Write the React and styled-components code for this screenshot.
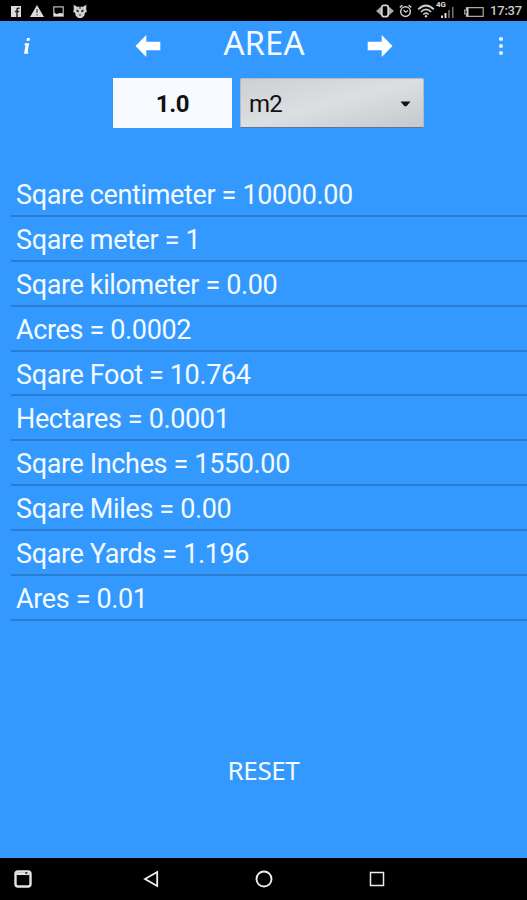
import React from 'react'
import styled, { createGlobalStyle } from 'styled-components'

const RESULTS = [
  { label: 'Sqare centimeter', value: '10000.00' },
  { label: 'Sqare meter', value: '1' },
  { label: 'Sqare kilometer', value: '0.00' },
  { label: 'Acres', value: '0.0002' },
  { label: 'Sqare Foot', value: '10.764' },
  { label: 'Hectares', value: '0.0001' },
  { label: 'Sqare Inches', value: '1550.00' },
  { label: 'Sqare Miles', value: '0.00' },
  { label: 'Sqare Yards', value: '1.196' },
  { label: 'Ares', value: '0.01' },
]

export default function App() {
  return (
    <Screen>
      <GlobalStyle />
      <StatusBar />
      <Toolbar>
        <InfoButton aria-label="Info">
          <svg width="10" height="18" viewBox="0 0 10 18" fill="#fff">
            <path d="M5 1h3l-.5 2.7h-3zM2.8 6.2h4.4L5.6 14.8h.8L6 16.8H2l1.6-8.6H2.4z" />
          </svg>
        </InfoButton>
        <ArrowButton aria-label="Previous">
          <ArrowIcon />
        </ArrowButton>
        <Title>AREA</Title>
        <ArrowButton aria-label="Next">
          <ArrowIcon flipped />
        </ArrowButton>
        <MenuButton aria-label="Menu">
          <svg width="6" height="20" viewBox="0 0 6 20" fill="#e8f5ff">
            <circle cx="3" cy="3" r="2.1" />
            <circle cx="3" cy="10" r="2.1" />
            <circle cx="3" cy="17" r="2.1" />
          </svg>
        </MenuButton>
      </Toolbar>
      <Converter>
        <Amount>1.0</Amount>
        <UnitSelect>
          m2
          <svg width="11" height="6" viewBox="0 0 11 6" fill="#111">
            <path d="M.5.5h10L6.5 5.2h-2z" />
          </svg>
        </UnitSelect>
      </Converter>
      <ResultList>
        {RESULTS.map(({ label, value }) => (
          <Result key={label}>
            {label} = {value}
          </Result>
        ))}
      </ResultList>
      <ResetRow>
        <ResetButton>RESET</ResetButton>
      </ResetRow>
      <NavigationBar />
    </Screen>
  )
}

function ArrowIcon({ flipped }) {
  return (
    <svg width="26" height="24" viewBox="0 0 26 24" fill="#fff">
      <path
        d="M.5 12 11.3 1v6.7h14v8.6h-14V23z"
        transform={flipped ? 'translate(26 0) scale(-1 1)' : undefined}
      />
    </svg>
  )
}

function StatusBar() {
  return (
    <StatusWrapper>
      <Notifications>
        <svg width="10" height="11" viewBox="0 0 10 11">
          <path d="M0 0h10v11H0z" fill="#dcdcdc" />
          <path d="M8.5 2.3H7.3Q6 2.3 6 3.6V11M3.9 5.4h4.3" stroke="#222" strokeWidth="1.5" fill="none" />
        </svg>
        <svg width="14" height="12" viewBox="0 0 14 12">
          <path d="M7 0l7 12H0z" fill="#dcdcdc" />
          <path d="M7 4v4M7 9.2v1.4" stroke="#555" strokeWidth="1.4" />
        </svg>
        <svg width="11" height="11" viewBox="0 0 11 11">
          <path d="M.8.8h9.4v9.4H.8z" fill="none" stroke="#bbb" strokeWidth="1.2" />
          <path d="M1 6.5l2.5 1.6L7 7l3 .5V10H1z" fill="#ddd" />
        </svg>
        <svg width="14" height="15" viewBox="0 0 14 15">
          <path
            d="M.6.8 4 2.7h6L13.4.8l-.2 4.5.6 2.8-1.9.7-.6 3L8.8 14H5.2l-2.5-2.2-.6-3L.2 8.1l.6-2.8z"
            fill="#d2d2d2"
          />
          <path
            d="M3.5 5.3l2.2 1.2v2L3.6 7.4zM10.5 5.3 8.3 6.5v2l2.1-1.1zM5.7 10.5h2.6L7 12zM6.5 3h1v2h-1z"
            fill="#222"
          />
        </svg>
      </Notifications>
      <SystemIcons>
        <svg width="18" height="14" viewBox="0 0 18 14">
          <path d="M5 2.8v8.4L0 7zM13 2.8v8.4L18 7z" fill="#aaa" />
          <rect x="5.8" y="1.4" width="6.4" height="11.2" rx="2" fill="#000" stroke="#d4d4d4" strokeWidth="1.8" />
        </svg>
        <svg width="13" height="14" viewBox="0 0 13 14" fill="none" stroke="#ccc">
          <circle cx="6.5" cy="7.6" r="4.8" strokeWidth="1.5" />
          <path d="M.8 3.4 3.4 1.2M12.2 3.4 9.6 1.2" strokeWidth="1.5" />
          <path d="M4.5 6l2.2 2.2L9 6.6" strokeWidth="1.2" />
        </svg>
        <svg width="18" height="14" viewBox="0 0 18 14" fill="none" stroke="#ccc" strokeWidth="1.7">
          <path d="M1.2 5.3Q9-2.3 16.8 5.3M3.9 8Q9 2.7 14.1 8M6.3 10.5Q9 7.8 11.7 10.5" />
          <circle cx="9" cy="12.3" r="1.2" fill="#ccc" stroke="none" />
        </svg>
        <Signal>
          <NetworkType>4G</NetworkType>
          <svg width="13" height="11" viewBox="0 0 13 11">
            <path d="M0 8.5h2V11H0zM3.5 6h2v5h-2z" fill="#ddd" />
            <path d="M7.2 3h1.6v8H7.2zM11 0h1.5v11H11z" fill="#777" />
          </svg>
        </Signal>
        <Battery width="20" height="10" viewBox="0 0 20 10">
          <path d="M2.5.7h16.7v8.6H2.5V7H.7V3h1.8z" fill="none" stroke="#aaa" strokeWidth="1.2" />
          <path d="M2.5 1h2v8h-2z" fill="#ccc" />
        </Battery>
        <Clock>17:37</Clock>
      </SystemIcons>
    </StatusWrapper>
  )
}

function NavigationBar() {
  return (
    <NavWrapper>
      <NavButton aria-label="Panel">
        <svg width="18" height="18" viewBox="0 0 18 18" fill="none" stroke="#e4e4e4">
          <rect x="1.5" y="1.5" width="15" height="15" rx="2.5" strokeWidth="2.4" />
          <path d="M2.5 3.8h13" strokeWidth="2.5" />
          <path d="M11.3 3h2" stroke="#111" strokeWidth="1.5" />
        </svg>
      </NavButton>
      <NavButton aria-label="Back">
        <svg width="16" height="18" viewBox="0 0 16 18" fill="none" stroke="#eee" strokeWidth="1.8">
          <path d="M14.2 2v14L2 9z" />
        </svg>
      </NavButton>
      <NavButton aria-label="Home">
        <svg width="18" height="18" viewBox="0 0 18 18" fill="none" stroke="#eee" strokeWidth="1.9">
          <circle cx="9" cy="9" r="7.5" />
        </svg>
      </NavButton>
      <NavButton aria-label="Recent apps">
        <svg width="16" height="16" viewBox="0 0 16 16" fill="none" stroke="#eee" strokeWidth="1.5">
          <rect x="1.5" y="1.5" width="13" height="13" />
        </svg>
      </NavButton>
    </NavWrapper>
  )
}

const GlobalStyle = createGlobalStyle`
  *, *::before, *::after {
    box-sizing: border-box;
  }

  body {
    margin: 0;
  }

  button {
    padding: 0;
    border: none;
    background: none;
    color: inherit;
    font: inherit;
  }

  svg {
    display: block;
    flex: none;
  }
`

const Screen = styled.div`
  display: flex;
  flex-direction: column;
  width: 527px;
  height: 900px;
  overflow: hidden;
  background: #3399ff;
  color: #f4fbff;
  font-family: Roboto, sans-serif;
`

const StatusWrapper = styled.div`
  flex: none;
  display: flex;
  justify-content: space-between;
  align-items: center;
  height: 21px;
  padding: 1px 5px 0 11px;
  background: #000;
`

const Notifications = styled.div`
  display: flex;
  align-items: center;
  gap: 9px;
`

const SystemIcons = styled.div`
  display: flex;
  align-items: center;
  gap: 5px;
`

const Signal = styled.div`
  position: relative;
  padding: 3px 0 0 1px;
`

const NetworkType = styled.span`
  position: absolute;
  top: -3px;
  left: -4px;
  color: #ddd;
  font-size: 8px;
  font-weight: 700;
  line-height: 8px;
`

const Battery = styled.svg`
  margin: 1px 1px 0 5px;
`

const Clock = styled.span`
  width: 32px;
  color: #ccc;
  font-size: 13px;
  font-weight: 500;
  letter-spacing: -0.2px;
  line-height: 18px;
  white-space: nowrap;
`

const Toolbar = styled.header`
  flex: none;
  display: grid;
  grid-template-columns: 113px 70px 162px 70px 112px;
  align-items: center;
  height: 49px;
`

const InfoButton = styled.button`
  justify-self: start;
  margin-left: 22px;
`

const ArrowButton = styled.button`
  justify-self: center;
`

const Title = styled.h1`
  margin: 0;
  padding-bottom: 6px;
  text-align: center;
  font-family: 'Noto Sans', sans-serif;
  font-size: 33px;
  font-weight: 400;
  line-height: 43px;
`

const MenuButton = styled.button`
  justify-self: end;
  margin-right: 23px;
`

const Converter = styled.div`
  flex: none;
  display: flex;
  gap: 8px;
  height: 102px;
  padding: 8px 0 0 113px;
  color: #111;
  font-size: 24px;
`

const Amount = styled.div`
  display: flex;
  justify-content: center;
  align-items: center;
  width: 119px;
  height: 50px;
  padding-top: 2px;
  background: #f7fbff;
  font-weight: 700;
  letter-spacing: -0.3px;
`

const UnitSelect = styled.div`
  display: flex;
  justify-content: space-between;
  align-items: center;
  width: 184px;
  height: 50px;
  padding: 2px 12px 0 8px;
  border: 1px solid #aebccb;
  border-bottom-color: #60758c;
  border-radius: 2px;
  background: linear-gradient(165deg, #cdd0d3, #dcdfe2 50%, #c6c9cc);
  letter-spacing: -0.7px;
`

const ResultList = styled.ul`
  flex: none;
  margin: 0;
  padding: 0 0 0 11px;
  list-style: none;
`

const Result = styled.li`
  height: 44.9px;
  padding-left: 5px;
  border-bottom: 2px solid #2b7bcf;
  font-size: 27px;
  letter-spacing: -0.36px;
  line-height: 47px;
  white-space: nowrap;
`

const ResetRow = styled.div`
  flex: 1;
  display: flex;
  justify-content: center;
  align-items: center;
  padding-top: 62px;
`

const ResetButton = styled.button`
  font-family: 'Noto Sans', sans-serif;
  font-size: 26px;
  letter-spacing: -0.4px;
`

const NavWrapper = styled.nav`
  flex: none;
  display: grid;
  grid-template-columns: 46px 210px 16px 209px;
  align-items: center;
  height: 42px;
  background: #000;
`

const NavButton = styled.button`
  justify-self: center;
`
